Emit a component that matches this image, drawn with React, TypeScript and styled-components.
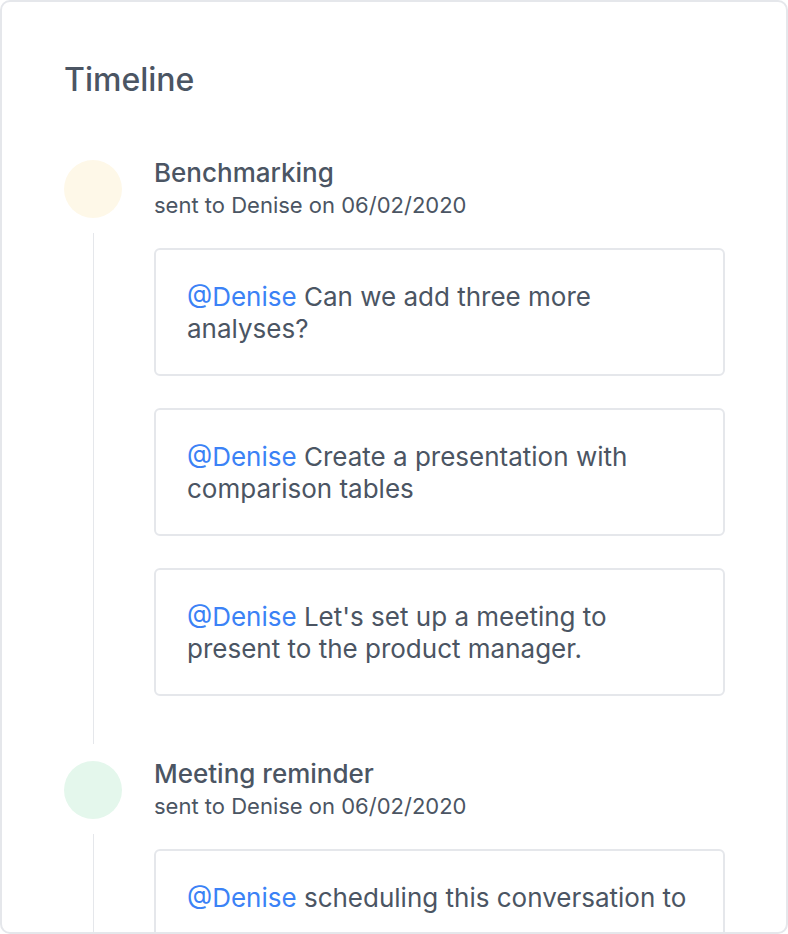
import React from "react";
import styled, { createGlobalStyle } from "styled-components";

interface Message {
  id: number;
  text: string;
}

interface TimelineEntry {
  id: number;
  title: string;
  recipient: string;
  date: string;
  tone: "yellow" | "green";
  messages: Message[];
}

const entries: TimelineEntry[] = [
  {
    id: 1,
    title: "Benchmarking",
    recipient: "Denise",
    date: "06/02/2020",
    tone: "yellow",
    messages: [
      { id: 1, text: "Can we add three more analyses?" },
      { id: 2, text: "Create a presentation with comparison tables" },
      { id: 3, text: "Let's set up a meeting to present to the product manager." },
    ],
  },
  {
    id: 2,
    title: "Meeting reminder",
    recipient: "Denise",
    date: "06/02/2020",
    tone: "green",
    messages: [{ id: 1, text: "scheduling this conversation to" }],
  },
];

const toneColors = {
  yellow: "#fef8e8",
  green: "#e4f7ec",
};

function App() {
  return (
    <>
      <GlobalStyle />
      <Panel>
        <Title>Timeline</Title>
        <List>
          {entries.map((entry) => (
            <Item key={entry.id}>
              <Rail>
                <Dot tone={entry.tone} />
                <Line />
              </Rail>
              <Content>
                <EntryTitle>{entry.title}</EntryTitle>
                <Meta>
                  sent to {entry.recipient} on {entry.date}
                </Meta>
                <Messages>
                  {entry.messages.map((msg) => (
                    <MessageCard key={msg.id}>
                      <Mention>@{entry.recipient}</Mention> {msg.text}
                    </MessageCard>
                  ))}
                </Messages>
              </Content>
            </Item>
          ))}
        </List>
      </Panel>
    </>
  );
}

export default App;

const GlobalStyle = createGlobalStyle`
  html, body {
    margin: 0;
    padding: 0;
    background: #ffffff;
  }
  body {
    font-family: Inter, "Noto Sans", sans-serif;
    color: #4b5563;
  }
  * {
    box-sizing: border-box;
  }
`;

const Panel = styled.div`
  width: 788px;
  height: 934px;
  border: 2px solid #e5e7eb;
  border-radius: 10px;
  padding: 58px 61px 0 62px;
  overflow: hidden;
  background: #ffffff;
`;

const Title = styled.h2`
  margin: 0 0 57px;
  font-size: 32px;
  line-height: 40px;
  font-weight: 500;
  color: #4b5563;
`;

const List = styled.div`
  display: flex;
  flex-direction: column;
`;

const Item = styled.div`
  display: grid;
  grid-template-columns: 58px 1fr;
  column-gap: 32px;
`;

const Rail = styled.div`
  display: flex;
  flex-direction: column;
  align-items: center;
  padding-top: 3px;
`;

const Dot = styled.div<{ tone: "yellow" | "green" }>`
  width: 58px;
  height: 58px;
  flex-shrink: 0;
  border-radius: 50%;
  background: ${(p) => toneColors[p.tone]};
`;

const Line = styled.div`
  flex: 1;
  width: 1px;
  margin: 15px 0 14px;
  background: #e5e7eb;
`;

const Content = styled.div`
  padding-bottom: 62px;
`;

const EntryTitle = styled.div`
  font-size: 26px;
  line-height: 32px;
  font-weight: 500;
`;

const Meta = styled.div`
  font-size: 22px;
  line-height: 32px;
`;

const Messages = styled.div`
  display: flex;
  flex-direction: column;
  gap: 32px;
  margin-top: 27px;
`;

const MessageCard = styled.div`
  border: 2px solid #e5e7eb;
  border-radius: 6px;
  padding: 31px 30px 29px 31px;
  font-size: 26px;
  line-height: 32px;
`;

const Mention = styled.span`
  color: #3b82f6;
`;
